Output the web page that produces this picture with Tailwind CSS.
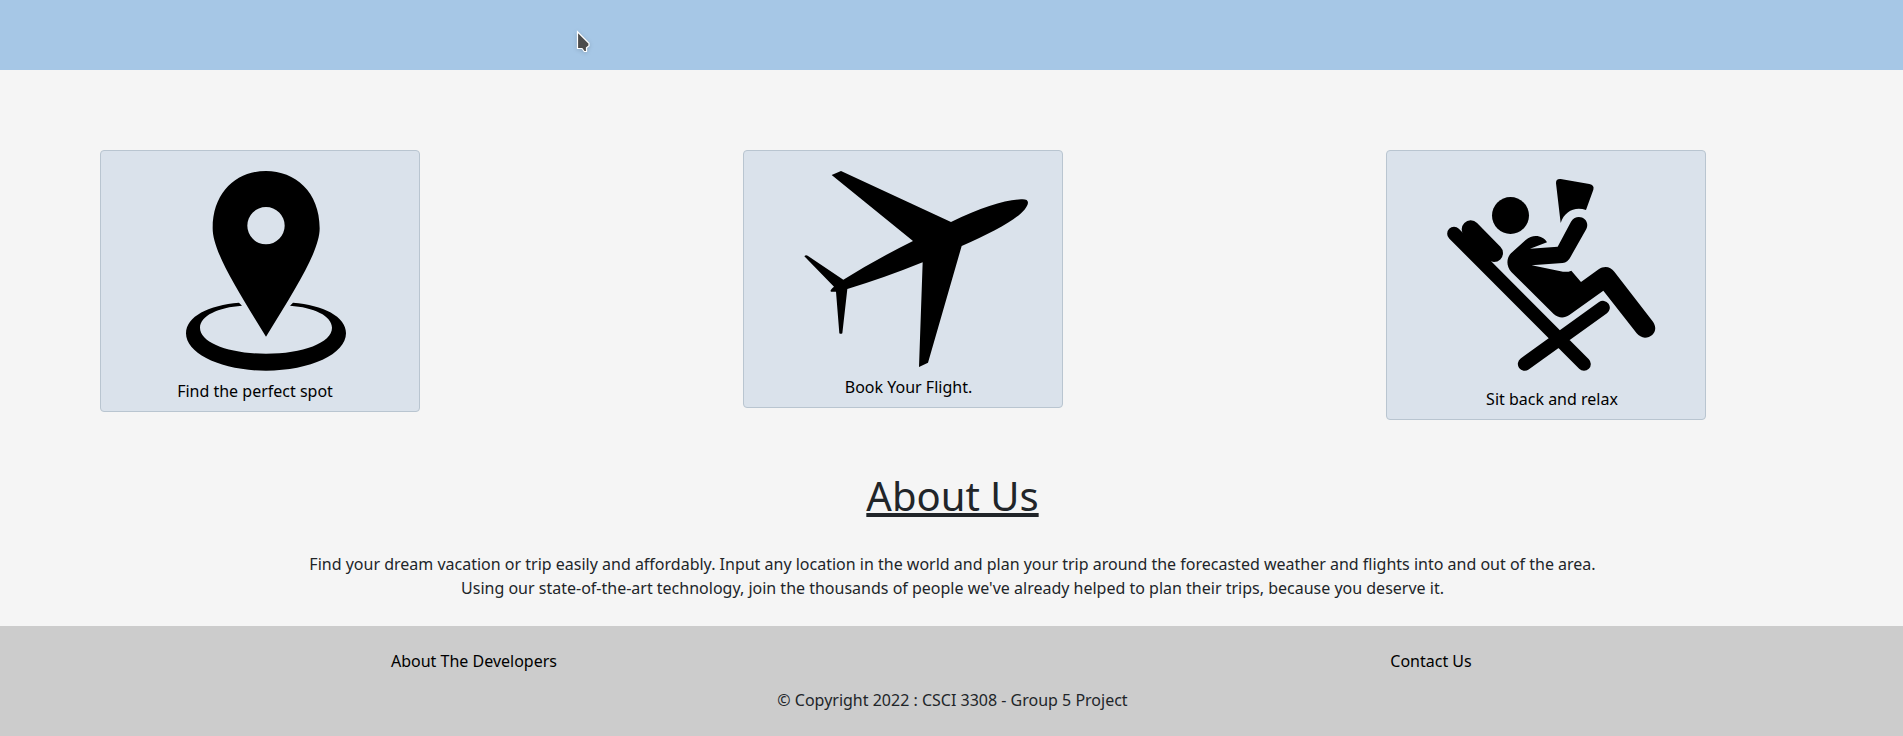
<!DOCTYPE html>
<html lang="en">
<head>
<meta charset="utf-8">
<title>Vacation Planner</title>
<script src="https://cdn.jsdelivr.net/npm/@tailwindcss/browser@4"></script>
</head>
<body class="h-[736px] overflow-hidden bg-[#f5f5f5] font-['Noto_Sans',sans-serif] text-base text-[#212529]">
<header class="relative h-[70px] bg-[#a6c7e6]">
  <svg class="absolute left-[575px] top-[29px] h-[26px] w-[18px] drop-shadow-sm" viewBox="0 0 18 26"><path d="M2.5 2.8V19.5H7L9.3 22.5H11.5V18.7L14 16.8V14.3Z" fill="#4c4c4c" stroke="#fff" stroke-width="1.2"/></svg>
</header>
<main class="flex h-[556px] flex-col items-center">
  <section class="flex h-[402px] w-full items-start gap-[323px] pl-[100px] pt-20 text-black">
    <div class="flex w-80 shrink-0 flex-col rounded border border-[#b9c5d0] bg-[#dae2eb] pb-2 text-center">
      <svg class="h-[228px] w-[318px]" viewBox="33 33 954 684">
        <path fill-rule="evenodd" d="M528 93C615 93 689 155 689 265C689 330 624 435 528 590C432 435 368 330 368 265C368 155 441 93 528 93ZM528 201A56 56 0 1 0 528 313A56 56 0 1 0 528 201Z"/>
        <path d="M447 488L456 497C385 502 330 527 330 563C330 608 418 641 528 641C638 641 726 608 726 563C726 527 671 502 600 497L609 488C699 495 768 529 768 580C768 642 661 692 528 692C395 692 288 642 288 580C288 529 357 495 447 488Z"/>
      </svg>
      <p class="pr-2.5">Find the perfect spot</p>
    </div>
    <div class="flex w-80 shrink-0 flex-col rounded border border-[#b9c5d0] bg-[#dae2eb] pb-2 text-center">
      <svg class="h-[224px] w-[318px]" viewBox="27 33 954 672">
        <path d="M290 105L318 93L648 246C740 201 810 180 858 178C872 177 879 180 879 188C875 222 793 269 680 318L579 668L552 681L563 367Q450 413 337 447L322 580Q317 583 313 580L303 455L288 455Q283 451 297 440L208 349Q212 344 218 347L325 419Q425 357 534 303Z"/>
      </svg>
      <p class="pl-[11px]">Book Your Flight.</p>
    </div>
    <div class="flex w-80 shrink-0 flex-col rounded border border-[#b9c5d0] bg-[#dae2eb] pb-2 text-center">
      <svg class="h-[236px] w-[318px]" viewBox="21 33 954 708">
        <circle cx="391.500" cy="226.500" r="55.500"/>
        <path d="M222 281L612 672M434 672L669 503" fill="none" stroke="#000" stroke-width="41" stroke-linecap="round"/>
        <path d="M272 268L342 339" fill="none" stroke="#000" stroke-width="54" stroke-linecap="round"/>
        <path d="M528 130Q527 116 542 117L628 132Q644 135 640 149L618 210C584 199 554 214 542 249Z"/>
        <path d="M393 340L437 300C459 281 489 286 501 307L450 326L533 320L573 245C591 217 633 236 619 267L572 350Q563 368 548 369L455 376L549 395Q563 397 574 392L603 426L656 388C671 377 691 378 703 395L819 545C836 570 818 593 795 593Q780 592 770 580L670 452L568 525C552 536 535 534 521 522L394 396C378 378 379 354 393 340Z"/>
      </svg>
      <p class="pl-3">Sit back and relax</p>
    </div>
  </section>
  <h1 class="pl-0.5 text-[40px] leading-[48px]"><span class="underline decoration-4 underline-offset-2">About Us</span></h1>
  <p class="mt-8 pl-0.5 text-center">Find your dream vacation or trip easily and affordably. Input any location in the world and plan your trip around the forecasted weather and flights into and out of the area.<br>Using our state-of-the-art technology, join the thousands of people we've already helped to plan their trips, because you deserve it.</p>
</main>
<footer class="h-[110px] bg-[#ccc] pt-[23px] text-center">
  <nav class="flex text-black">
    <a class="w-[948px] shrink-0">About The Developers</a>
    <a class="flex-1 pl-[11px]">Contact Us</a>
  </nav>
  <p class="mt-[15px] pl-0.5">© Copyright 2022 : CSCI 3308 - Group 5 Project</p>
</footer>
</body>
</html>
